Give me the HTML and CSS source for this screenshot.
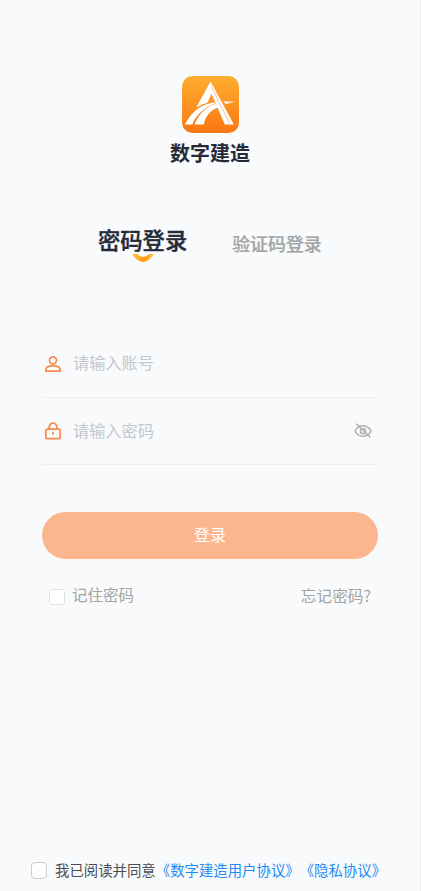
FILE: index.html
```html
<!DOCTYPE html>
<html lang="zh-CN">
<head>
<meta charset="utf-8">
<meta name="viewport" content="width=device-width, initial-scale=1">
<title>数字建造</title>
<link rel="stylesheet" href="styles.css">
</head>
<body>
<main class="page">
  <header class="brand">
    <svg class="logo" viewBox="0 0 168 168">
      <defs><linearGradient id="bg" x1="0" y1="0" x2="0" y2="1"><stop offset="0" stop-color="#ffae2f"/><stop offset="1" stop-color="#fa7714"/></linearGradient></defs>
      <rect width="168" height="168" rx="31" fill="url(#bg)"/>
      <path d="M84 16 L42 93 Q60 82 75 79 L87 52 L101 85 L126 143 H153 Z" fill="#fff"/>
      <path d="M87 32 L141 141" stroke="#f8a35b" stroke-width="2"/>
      <path d="M8 143 C31 99 62 79 105 77 C67 91 43 112 30 143 Z" fill="#fff"/>
      <path d="M37 143 C49 112 72 88 104 80 L108 92 C83 100 69 119 64 143 Z" fill="#fff"/>
      <path d="M122 74 L156 76 L128 83 Z" fill="#fff" opacity=".85"/>
    </svg>
    <h1 class="name">数字建造</h1>
  </header>
  <nav class="tabs">
    <div class="tab active">密码登录
      <svg class="smile" viewBox="0 0 24 10"><defs><linearGradient id="sm"><stop offset="0" stop-color="#ffc44b"/><stop offset=".55" stop-color="#ff9b0b"/><stop offset="1" stop-color="#ffc44b"/></linearGradient></defs><path d="M1 1 Q12 17 23 1 L18 1 Q12 7 6 1 Z" fill="url(#sm)"/></svg>
    </div>
    <div class="tab">验证码登录</div>
  </nav>
  <form class="form">
    <div class="field">
      <svg class="icon" viewBox="0 0 18 18"><circle cx="9" cy="5.3" r="3.5"/><path d="M1.8 16.200v-1.500c0-2.400 3-3.900 7.200-3.900s7.200 1.500 7.200 3.900v1.500z"/></svg>
      <span class="hint">请输入账号</span>
    </div>
    <div class="field">
      <svg class="icon" viewBox="0 0 18 18"><rect x="1.800" y="7.200" width="14.400" height="9.500" rx="1.800"/><path d="M5.200 7V5a3.800 3.800 0 0 1 7.600 0v2M9 9.700v3"/></svg>
      <span class="hint">请输入密码</span>
      <svg class="eye" viewBox="0 0 18 18"><path d="M1 9c1.800-3.600 4.600-5.300 8-5.300s6.200 1.700 8 5.300c-1.800 3.600-4.600 5.300-8 5.300S2.800 12.600 1 9z"/><circle cx="9" cy="9" r="2.600"/><path d="M2.200 1.700l14 13.500"/></svg>
    </div>
    <div class="submit">登录</div>
    <div class="options">
      <label class="remember"><i class="box"></i><span>记住密码</span></label>
      <span class="forgot">忘记密码?</span>
    </div>
  </form>
  <footer class="agreement">
    <i class="box check"></i><span>我已阅读并同意</span><a>《数字建造用户协议》</a><a>《隐私协议》</a>
  </footer>
</main>
</body>
</html>
```
FILE: styles.css
```css
* { box-sizing: border-box; }
body { margin: 0; background: #f8fafc; font-family: "Noto Sans CJK SC", sans-serif; }
.page { display: flex; flex-direction: column; height: 891px; border-right: 1px solid #eceef0; overflow: hidden; }
.brand { display: flex; flex-direction: column; align-items: center; padding-top: 76px; }
.logo { width: 57px; height: 57px; }
.name { margin: 5px 0 0; font-size: 20px; line-height: 30px; font-weight: 700; color: #262a38; }
.tabs { display: flex; align-items: flex-start; gap: 45px; margin: 54px 0 0 98px; height: 47px; }
.tab { font-size: 17.9px; line-height: 34px; font-weight: 500; color: #a3a4a4; white-space: nowrap; -webkit-text-stroke: .2px #a3a4a4; }
.tab:last-child { padding-top: 4px; }
.tab.active { position: relative; font-size: 22.3px; color: #262a38; -webkit-text-stroke: .4px #262a38; }
.smile { position: absolute; left: 33px; top: 31px; width: 24px; height: 10px; }
.form { margin: 61px 42px 0; }
.field { display: flex; align-items: center; height: 67px; padding: 0 6px 0 2px; border-bottom: 1px solid #eceef0; }
.field:first-child { height: 68px; }
.icon { width: 18px; height: 18px; fill: none; stroke: #fa8a48; stroke-width: 1.7; stroke-linejoin: round; }
.hint { flex: 1; margin-left: 11px; padding-bottom: 3px; font-size: 16.2px; line-height: 24px; color: #c3c7ce; }
.eye { width: 18px; height: 18px; fill: none; stroke: #adafb0; stroke-width: 1.5; }
.submit { height: 47px; margin-top: 47px; border-radius: 24px; background: #fbb68d; color: #fff; font-size: 16.2px; line-height: 45px; text-align: center; }
.options { display: flex; justify-content: space-between; margin-top: 24px; padding: 0 7px; font-size: 15.5px; line-height: 23px; color: #a3a4a4; }
.remember { display: flex; }
.box { flex: none; width: 16px; height: 16px; margin: 6px 7px 0 0; border: 1px solid #dfe2e5; border-radius: 3px; background: #fff; }
.forgot { padding-top: 1px; font-size: 15.7px; }
.agreement { display: flex; align-items: center; margin: auto 0 9px 31px; font-size: 14.4px; line-height: 24px; color: #4c4d50; white-space: nowrap; }
.check { width: 16px; height: 17px; margin: 1px 8px 0 0; border-color: #c9ccd1; border-radius: 4px; }
.agreement a { color: #1e8cf5; text-spacing-trim: space-all; }
```
